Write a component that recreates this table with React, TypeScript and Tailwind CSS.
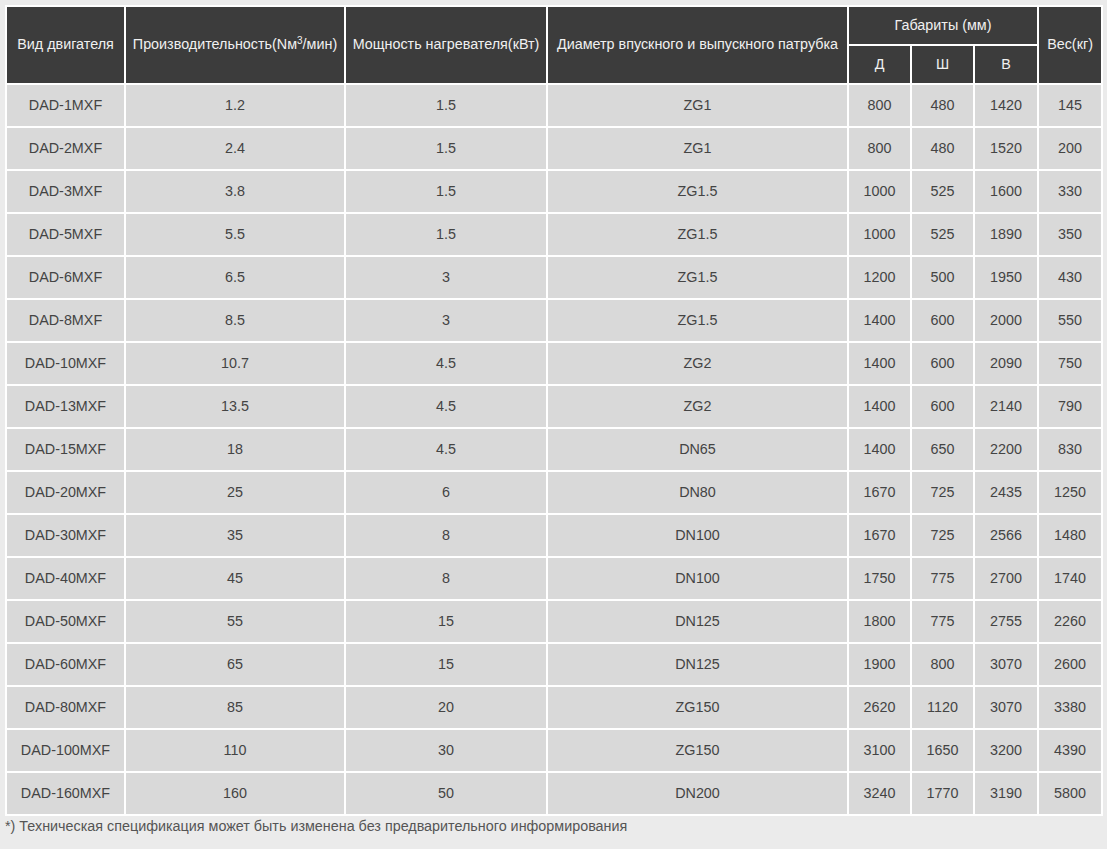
const rows: string[][] = [
  ['DAD-1MXF', '1.2', '1.5', 'ZG1', '800', '480', '1420', '145'],
  ['DAD-2MXF', '2.4', '1.5', 'ZG1', '800', '480', '1520', '200'],
  ['DAD-3MXF', '3.8', '1.5', 'ZG1.5', '1000', '525', '1600', '330'],
  ['DAD-5MXF', '5.5', '1.5', 'ZG1.5', '1000', '525', '1890', '350'],
  ['DAD-6MXF', '6.5', '3', 'ZG1.5', '1200', '500', '1950', '430'],
  ['DAD-8MXF', '8.5', '3', 'ZG1.5', '1400', '600', '2000', '550'],
  ['DAD-10MXF', '10.7', '4.5', 'ZG2', '1400', '600', '2090', '750'],
  ['DAD-13MXF', '13.5', '4.5', 'ZG2', '1400', '600', '2140', '790'],
  ['DAD-15MXF', '18', '4.5', 'DN65', '1400', '650', '2200', '830'],
  ['DAD-20MXF', '25', '6', 'DN80', '1670', '725', '2435', '1250'],
  ['DAD-30MXF', '35', '8', 'DN100', '1670', '725', '2566', '1480'],
  ['DAD-40MXF', '45', '8', 'DN100', '1750', '775', '2700', '1740'],
  ['DAD-50MXF', '55', '15', 'DN125', '1800', '775', '2755', '2260'],
  ['DAD-60MXF', '65', '15', 'DN125', '1900', '800', '3070', '2600'],
  ['DAD-80MXF', '85', '20', 'ZG150', '2620', '1120', '3070', '3380'],
  ['DAD-100MXF', '110', '30', 'ZG150', '3100', '1650', '3200', '4390'],
  ['DAD-160MXF', '160', '50', 'DN200', '3240', '1770', '3190', '5800'],
];

const App = () => {
  return (
    <div className="min-h-[849px] bg-[#ebebeb] pt-[5px] pl-[5px] font-['Liberation_Sans',Arial,sans-serif]">
      {/* Spec table */}
      <table className="w-[1098px] table-fixed border-separate border-spacing-[2px] bg-white text-[14.35px]">
        <colgroup>
          <col className="w-[117px]" />
          <col className="w-[218px]" />
          <col className="w-[200px]" />
          <col className="w-[299px]" />
          <col className="w-[61px]" />
          <col className="w-[61px]" />
          <col className="w-[62px]" />
          <col className="w-[62px]" />
        </colgroup>
        <thead className="text-[#f0f0f0]">
          <tr className="h-[37px]">
            <th rowSpan={2} className="bg-[#3c3c3c] p-0 font-normal">Вид двигателя</th>
            <th rowSpan={2} className="bg-[#3c3c3c] p-0 font-normal whitespace-nowrap">
              Производительность(Nм<sup className="text-[10px]">3</sup>/мин)
            </th>
            <th rowSpan={2} className="bg-[#3c3c3c] p-0 font-normal whitespace-nowrap">Мощность нагревателя(кВт)</th>
            <th rowSpan={2} className="bg-[#3c3c3c] p-0 font-normal whitespace-nowrap">
              Диаметр впускного и выпускного патрубка
            </th>
            <th colSpan={3} className="bg-[#3c3c3c] p-0 font-normal">Габариты (мм)</th>
            <th rowSpan={2} className="bg-[#3c3c3c] p-0 font-normal">Вес(кг)</th>
          </tr>
          <tr className="h-[37px]">
            <th className="bg-[#3c3c3c] p-0 font-normal">Д</th>
            <th className="bg-[#3c3c3c] p-0 font-normal">Ш</th>
            <th className="bg-[#3c3c3c] p-0 font-normal">В</th>
          </tr>
        </thead>
        <tbody className="text-[#444]">
          {rows.map((r) => (
            <tr key={r[0]} className="h-[41px]">
              {r.map((c, i) => (
                <td key={i} className="bg-[#d9d9d9] p-0 text-center">
                  {c}
                </td>
              ))}
            </tr>
          ))}
        </tbody>
      </table>
      <p className="text-[14.35px] leading-[20px] text-[#555]">
        *) Техническая спецификация может быть изменена без предварительного информирования
      </p>
    </div>
  );
};

export default App;
